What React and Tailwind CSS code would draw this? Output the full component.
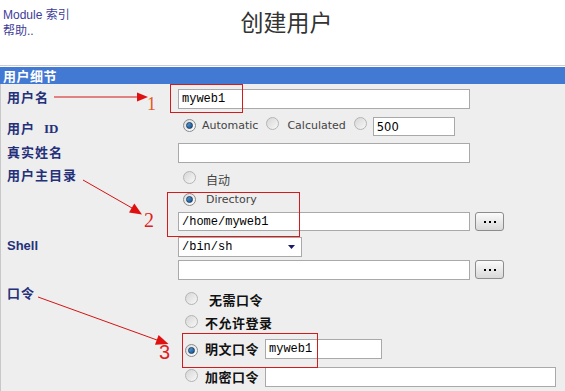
import React from "react";

const CJK = "font-['Noto_Sans_CJK_SC',sans-serif]";
const UI = "font-['DejaVu_Sans','Noto_Sans_CJK_SC',sans-serif]";

function Radio({ checked }) {
  return (
    <span
      className={
        "inline-flex items-center justify-center w-[13px] h-[13px] rounded-full border shrink-0 " +
        (checked
          ? "border-[#8a8a8a] bg-gradient-to-br from-[#dcdcdc] to-[#ffffff]"
          : "border-[#b4b4b4] bg-gradient-to-br from-[#d6d6d6] to-[#f8f8f8]")
      }
    >
      {checked && (
        <span className="w-[7px] h-[7px] rounded-full bg-gradient-to-br from-[#4fa3e0] to-[#1b4f8a] border border-[#1a3a60]" />
      )}
    </span>
  );
}

function TextBox({ w, h = "h-[20px]", value = "", mono = true }) {
  return (
    <input
      readOnly
      value={value}
      className={
        "block bg-white border border-[#a9a9a9] px-[3px] text-black outline-none " +
        w +
        " " +
        h +
        " " +
        (mono ? "text-[12px] font-['Liberation_Mono',monospace]" : "text-[11.5px] " + UI)
      }
    />
  );
}

function DotsButton() {
  return (
    <div className="ml-[5px] w-[29px] h-[19px] rounded-[3px] border border-[#8c8c8c] bg-gradient-to-b from-[#fbfbfb] to-[#d9d9d9] flex items-center justify-center gap-[3px]">
      <span className="w-[2px] h-[2px] bg-black" />
      <span className="w-[2px] h-[2px] bg-black" />
      <span className="w-[2px] h-[2px] bg-black" />
    </div>
  );
}

function Label({ children, pt }) {
  return (
    <div
      className={
        "w-[177px] shrink-0 pl-[6px] text-[13px] leading-[16px] font-bold tracking-[1px] text-[#25307a] " +
        CJK +
        " " +
        pt
      }
    >
      {children}
    </div>
  );
}

export default function App() {
  return (
    <div className="relative w-[565px] h-[391px] bg-white overflow-hidden font-['Liberation_Sans',sans-serif]">
      {/* top area */}
      <div className="flex h-[65px]">
        <div className="w-[100px] pl-[3px] pt-[7px] text-[12px] leading-[16px] text-[#3d3d99] font-['Liberation_Sans','Noto_Sans_CJK_SC',sans-serif]">
          <div>Module 索引</div>
          <div>帮助..</div>
        </div>
        <div className={"flex-1 text-center pt-[6px] text-[23px] leading-[30px] text-[#333333] " + CJK}>
          创建用户
        </div>
        <div className="w-[92px]" />
      </div>

      {/* table */}
      <div className="border-t border-[#cdcdcd] pt-[1px]">
        <div className={"h-[17px] bg-[#4279d2] pl-[3px] text-white text-[13px] leading-[17px] font-bold tracking-[0.5px] " + CJK}>
          用户细节
        </div>
        <div className="bg-[#eeeeee] border-l border-[#c8c8c8] h-[310px]">
          {/* row 1 */}
          <div className="flex h-[31px]">
            <Label pt="pt-[5px]">用户名</Label>
            <div className="pt-[5px]">
              <TextBox w="w-[292px]" value="myweb1" />
            </div>
          </div>
          {/* row 2 */}
          <div className="flex h-[25px]">
            <Label pt="pt-[5px]">
              用户<span className="ml-[9px] font-['Liberation_Serif',serif] tracking-normal">ID</span>
            </Label>
            <div className={"pt-[2px] flex items-center h-[21px] text-[11px] text-[#444] " + UI}>
              <span className="ml-[5px]"><Radio checked /></span>
              <span className="ml-[6px]">Automatic</span>
              <span className="ml-[8px]"><Radio /></span>
              <span className="ml-[8px]">Calculated</span>
              <span className="ml-[8px]"><Radio /></span>
              <span className="ml-[6px]">
                <TextBox w="w-[82px]" h="h-[19px]" value="500" mono={false} />
              </span>
            </div>
          </div>
          {/* row 3 */}
          <div className="flex h-[26px]">
            <Label pt="pt-[4px]">真实姓名</Label>
            <div className="pt-[3px]">
              <TextBox w="w-[292px]" />
            </div>
          </div>
          {/* row 4 */}
          <div className="flex h-[65px]">
            <Label pt="pt-[1px]">用户主目录</Label>
            <div className={"pt-[4px] text-[11px] text-[#444] " + UI}>
              <div className="flex items-center h-[20px]">
                <span className="ml-[5px]"><Radio /></span>
                <span className={"ml-[10px] text-[12px] " + CJK}>自动</span>
              </div>
              <div className="flex items-center h-[20px]">
                <span className="ml-[5px]"><Radio checked /></span>
                <span className="ml-[10px]">Directory</span>
              </div>
              <div className="flex mt-[2px]">
                <TextBox w="w-[292px]" h="h-[19px]" value="/home/myweb1" />
                <DotsButton />
              </div>
            </div>
          </div>
          {/* row 5 */}
          <div className="flex h-[49px]">
            <Label pt="pt-[6px]">
              <span className="font-['Liberation_Sans',sans-serif] tracking-normal">Shell</span>
            </Label>
            <div className="pt-[6px]">
              <div className="w-[124px] h-[20px] bg-white border border-[#a9a9a9] flex items-center justify-between pl-[3px] pr-[6px] font-['Liberation_Mono',monospace] text-[12px] text-black">
                <span>/bin/sh</span>
                <svg width="7" height="4" viewBox="0 0 7 4">
                  <polygon points="0,0 7,0 3.5,4" fill="#1a1a6a" />
                </svg>
              </div>
              <div className="flex mt-[3px]">
                <TextBox w="w-[292px]" />
                <DotsButton />
              </div>
            </div>
          </div>
          {/* row 6 */}
          <div className="flex">
            <Label pt="pt-[5px]">口令</Label>
            <div className={"pt-[10px] text-[13px] font-bold tracking-[0.5px] text-[#111] " + CJK}>
              <div className="flex items-center h-[20px]">
                <span className="ml-[7px]"><Radio /></span>
                <span className="ml-[11px]">无需口令</span>
              </div>
              <div className="flex items-center h-[20px] mt-[3px]">
                <span className="ml-[7px]"><Radio /></span>
                <span className="ml-[7px]">不允许登录</span>
              </div>
              <div className="flex items-center h-[20px] mt-[6px]">
                <span className="ml-[7px]"><Radio checked /></span>
                <span className="ml-[7px]">明文口令</span>
                <span className="ml-[6px] tracking-normal font-normal">
                  <TextBox w="w-[117px]" value="myweb1" />
                </span>
              </div>
              <div className="flex items-center h-[20px] mt-[8px]">
                <span className="ml-[7px]"><Radio /></span>
                <span className="ml-[7px]">加密口令</span>
                <span className="ml-[6px] tracking-normal font-normal">
                  <TextBox w="w-[291px]" />
                </span>
              </div>
            </div>
          </div>
        </div>
      </div>

      {/* annotations */}
      <div className="absolute left-[170px] top-[84px] w-[73px] h-[29px] border border-[#d21c1c] pointer-events-none" />
      <div className="absolute left-[167px] top-[192px] w-[133px] h-[45px] border border-[#d21c1c] pointer-events-none" />
      <div className="absolute left-[182px] top-[333px] w-[136px] h-[35px] border border-[#d21c1c] pointer-events-none" />

      <svg className="absolute left-0 top-0 pointer-events-none" width="565" height="391" viewBox="0 0 565 391">
        <line x1="54" y1="97" x2="138" y2="97" stroke="#d41414" strokeWidth="1" />
        <polygon points="137,92.5 148,97 137,101.5" fill="#e01010" />
        <line x1="83" y1="180" x2="132" y2="208" stroke="#d41414" strokeWidth="1" />
        <polygon points="142,214.5 129,212.5 134.3,203.5" fill="#e01010" />
        <line x1="38" y1="297" x2="157" y2="340" stroke="#d41414" strokeWidth="1" />
        <polygon points="168.5,344 155,344.8 158.6,335" fill="#e01010" />
      </svg>
      <span className="absolute left-[147px] top-[94px] text-[18px] leading-[20px] text-[#e2581c] font-['Liberation_Serif',serif]">1</span>
      <span className="absolute left-[144px] top-[209px] text-[20px] leading-[22px] text-[#e02020] font-['Liberation_Serif',serif]">2</span>
      <span className="absolute left-[159px] top-[342px] text-[20px] leading-[20px] text-[#e02020] font-['Liberation_Sans',sans-serif]">3</span>
    </div>
  );
}
